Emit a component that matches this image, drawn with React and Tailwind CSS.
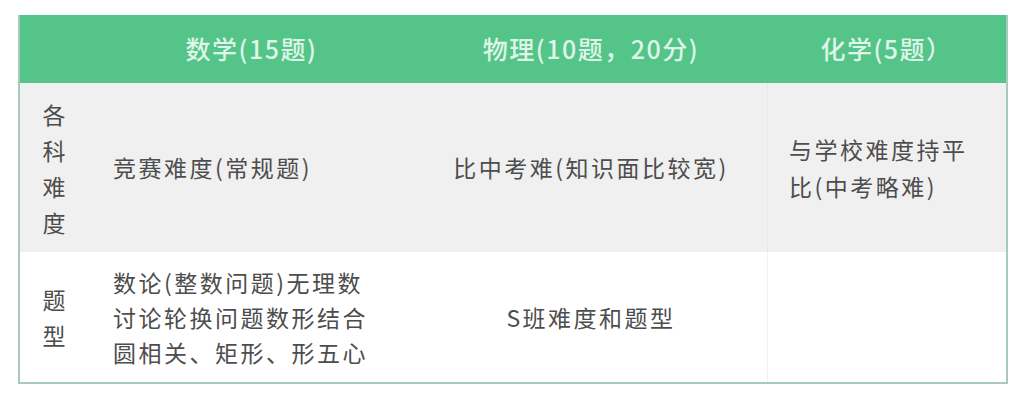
import React from 'react';

const font = { fontFamily: '"Noto Sans CJK SC", "Noto Sans", sans-serif' };

function VerticalLabel({ chars }) {
  return (
    <div className="flex flex-col items-center justify-center text-[23px] leading-[36px] tracking-normal text-[#4d4d4d]">
      {chars.split('').map((c, i) => (
        <span key={i}>{c}</span>
      ))}
    </div>
  );
}

export default function App() {
  return (
    <div className="h-[400px] w-[1024px] bg-white pl-[18px] pt-[15px]" style={font}>
      <div className="w-[990px] border-2 border-t-0 border-[#a8c9bd]">
        <div className="grid h-[68px] grid-cols-[68px_327px_352px_1fr] items-center bg-[#55c489] text-[25px] font-medium tracking-[1.5px] text-[#ddf6e7]">
          <div />
          <div className="text-center">数学(15题)</div>
          <div className="text-center">物理(10题，20分)</div>
          <div className="text-center">化学(5题）</div>
        </div>

        <div className="grid h-[169px] grid-cols-[68px_327px_352px_1fr] bg-[#f0f0f0] text-[23px] tracking-[2.5px] text-[#4d4d4d]">
          <VerticalLabel chars="各科难度" />
          <div className="flex items-center pl-[25px]">竞赛难度(常规题)</div>
          <div className="flex items-center justify-center">比中考难(知识面比较宽)</div>
          <div className="flex items-center border-l border-[#e8e8e8] pl-[21px] pr-[20px] leading-[37px]">
            与学校难度持平比(中考略难)
          </div>
        </div>

        <div className="grid h-[130px] grid-cols-[68px_327px_352px_1fr] bg-white text-[23px] tracking-[2.5px] text-[#4d4d4d]">
          <VerticalLabel chars="题型" />
          <div className="flex flex-col justify-center pl-[25px] leading-[35px]">
            <span>数论(整数问题)无理数</span>
            <span>讨论轮换问题数形结合</span>
            <span>圆相关、矩形、形五心</span>
          </div>
          <div className="flex items-center justify-center">S班难度和题型</div>
          <div className="border-l border-[#f0f0f0]" />
        </div>
      </div>
    </div>
  );
}
